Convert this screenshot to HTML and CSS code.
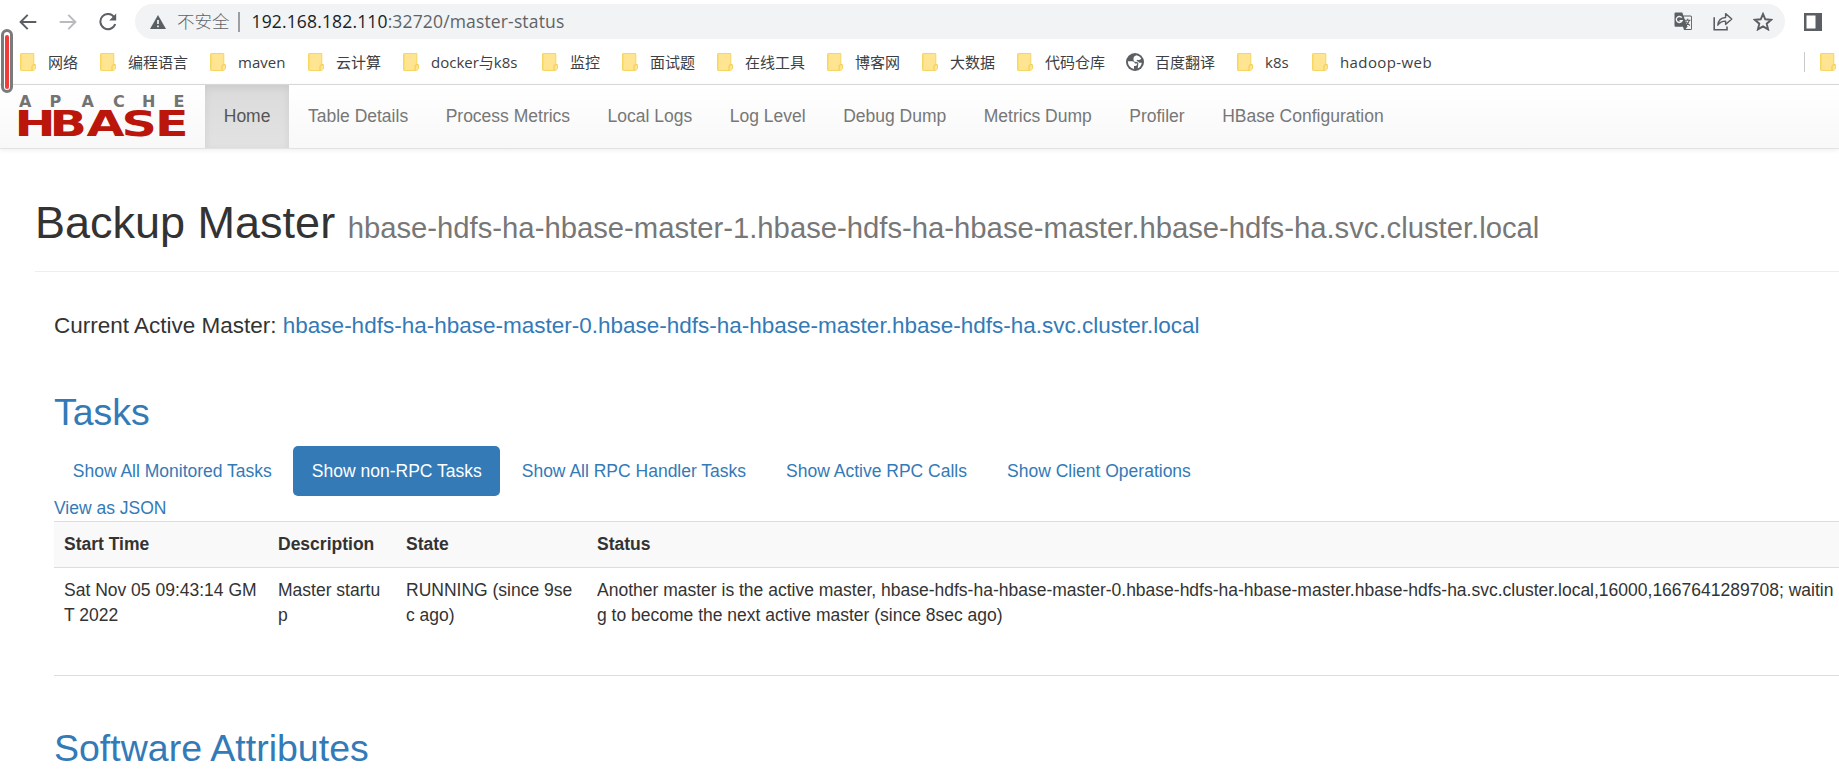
FILE: index.html
```html
<!DOCTYPE html>
<html lang="zh-CN">
<head>
<meta charset="utf-8">
<title>Backup Master</title>
<link rel="stylesheet" href="styles.css">
</head>
<body>
<svg class="defs" width="0" height="0" aria-hidden="true">
  <symbol id="folder" viewBox="0 0 16 18">
    <path d="M1.2.5h12.6v11.2h1.7v4.1l-1.8 1.7H1.2q-.7 0-.7-.7V1.2q0-.7.7-.7z" fill="#ffe591" stroke="#f5d565"/>
    <path d="M1 1v16" stroke="#f7d961" stroke-width="1.2"/>
    <path d="M12 17v-3.800q0-1.500 1.700-1.500h1.300" fill="none" stroke="#efca4d"/>
  </symbol>
</svg>

<div class="browser">
  <div class="toolbar">
    <svg class="tool back" width="18" height="16" viewBox="0 0 18 16"><path d="M17.300 8H2M8.700.900L1.600 8l7.100 7.100" fill="none" stroke="#5b5f63" stroke-width="2"/></svg>
    <svg class="tool forward" width="18" height="16" viewBox="0 0 18 16"><path d="M.700 8H16M9.300.900L16.400 8l-7.100 7.100" fill="none" stroke="#b9bbbd" stroke-width="2"/></svg>
    <svg class="tool reload" width="18" height="18" viewBox="0 0 18 18"><path d="M15.200 4.200A7.600 7.600 0 1 0 16.200 11" fill="none" stroke="#5b5f63" stroke-width="2"/><path d="M17.200.500v7h-7z" fill="#5b5f63"/></svg>
    <div class="omnibox">
      <svg class="warning" width="16" height="14" viewBox="0 0 16 14"><path d="M8 0l8 14H0z" fill="#5b5f63"/><path d="M8 5v4M8 10.500v1.800" stroke="#f1f3f4" stroke-width="1.700"/></svg>
      <span class="insecure">不安全</span>
      <span class="bar"></span>
      <span class="url"><b>192.168.182.110</b>:32720/master-status</span>
      <div class="actions">
        <svg width="19" height="19" viewBox="0 0 19 19"><path d="M1.500.500h6.800l1 3h7.200q1.500 0 1.500 1.500v11.500q0 1.500-1.500 1.500H10l-1-3.200H1.500Q.500 14.800.500 13.500v-12q0-1 1-1z" fill="#5b5f63"/><path d="M9.700 4.500h6.800q.6 0 .6.600v11.300q0 .6-.6.600h-5l2-2.300z" fill="#f1f3f4"/><path d="M7.800 5.700a3 3 0 1 0 .3 3H5.500" fill="none" stroke="#f1f3f4" stroke-width="1.400"/><path d="M11 8.200h5.500M13.700 6.700v1.500M15.400 8.200q-.8 3.500-3.700 5.300M12 9.500q1.500 2.700 4 4" fill="none" stroke="#5b5f63" stroke-width="1.100"/></svg>
        <svg width="20" height="19" viewBox="0 0 20 19"><path d="M1.200 5.200v12.500H14v-3.200" fill="none" stroke="#5b5f63" stroke-width="1.600"/><path d="M4.800 13.200Q5.500 6 12.600 5.500V1.600L18.800 7l-6.200 5.400V9.100Q7.600 9 4.800 13.200z" fill="none" stroke="#5b5f63" stroke-width="1.400" stroke-linejoin="round"/></svg>
        <svg width="20" height="19" viewBox="0 0 20 19"><path d="M10 2l2.300 5.300 5.900.500-4.500 3.900 1.400 5.700-5.100-3-5.100 3 1.400-5.700-4.500-3.900 5.900-.500z" fill="none" stroke="#5b5f63" stroke-width="1.900"/></svg>
      </div>
    </div>
    <svg class="sidepanel" width="18" height="18" viewBox="0 0 18 18"><path d="M0 0h18v18H0zM2.500 2.500v13h9v-13z" fill="#5b5f63" fill-rule="evenodd"/></svg>
  </div>

  <div class="bookmarks">
    <div class="bm"><svg><use href="#folder"/></svg><span>网络</span></div>
    <div class="bm"><svg><use href="#folder"/></svg><span>编程语言</span></div>
    <div class="bm"><svg><use href="#folder"/></svg><span>maven</span></div>
    <div class="bm"><svg><use href="#folder"/></svg><span>云计算</span></div>
    <div class="bm"><svg><use href="#folder"/></svg><span>docker与k8s</span></div>
    <div class="bm"><svg><use href="#folder"/></svg><span>监控</span></div>
    <div class="bm"><svg><use href="#folder"/></svg><span>面试题</span></div>
    <div class="bm"><svg><use href="#folder"/></svg><span>在线工具</span></div>
    <div class="bm"><svg><use href="#folder"/></svg><span>博客网</span></div>
    <div class="bm"><svg><use href="#folder"/></svg><span>大数据</span></div>
    <div class="bm"><svg><use href="#folder"/></svg><span>代码仓库</span></div>
    <div class="bm globe"><svg viewBox="0 0 18 18"><circle cx="9" cy="9" r="9" fill="#5b5f63"/><path d="M1.800 8.200h4.700q2 .3 2.500 2.300h2.300q-.2 2.500-2.300 2.500H8v3Q2 14.500 1.800 8.200zM7.500 4.800Q8 3 10.500 2.200q3.500.8 4.800 3.300-1 2-3.300 1.300-1.700 0-1.500 1.500 2.200-.3 2.600 1.500h2.700q-.6 4-4 5.600l.4-3.800q.8-2.300-1.700-2.600-3 .2-3-2z" fill="#fff"/></svg><span>百度翻译</span></div>
    <div class="bm"><svg><use href="#folder"/></svg><span>k8s</span></div>
    <div class="bm wide"><svg><use href="#folder"/></svg><span>hadoop-web</span></div>
    <div class="bm other"><svg><use href="#folder"/></svg></div>
  </div>
  <div class="marker"></div>
</div>

<nav class="navbar">
  <svg class="logo" width="170" height="46" viewBox="0 0 170 46" role="img" aria-label="Apache HBase">
    <text class="logo-top" x="0 30.500 62.500 94 123 154.500" y="14">APACHE</text>
    <text class="logo-main" transform="scale(1.38 1)" x="-3.300 22.100 48.900 74.200 98.600" y="43">HBASE</text>
  </svg>
  <ul class="menu">
    <li class="active">Home</li>
    <li>Table Details</li>
    <li>Process Metrics</li>
    <li>Local Logs</li>
    <li>Log Level</li>
    <li>Debug Dump</li>
    <li>Metrics Dump</li>
    <li>Profiler</li>
    <li>HBase Configuration</li>
  </ul>
</nav>

<main class="page">
  <h1 class="title">Backup Master <small>hbase-hdfs-ha-hbase-master-1.hbase-hdfs-ha-hbase-master.hbase-hdfs-ha.svc.cluster.local</small></h1>
  <div class="content">
    <h4 class="current">Current Active Master: <a>hbase-hdfs-ha-hbase-master-0.hbase-hdfs-ha-hbase-master.hbase-hdfs-ha.svc.cluster.local</a></h4>
    <h2 class="section"><a>Tasks</a></h2>
    <ul class="pills">
      <li>Show All Monitored Tasks</li>
      <li class="active">Show non-RPC Tasks</li>
      <li>Show All RPC Handler Tasks</li>
      <li>Show Active RPC Calls</li>
      <li>Show Client Operations</li>
    </ul>
    <a class="json">View as JSON</a>
    <table class="tasks">
      <colgroup><col class="c-time"><col class="c-desc"><col class="c-state"><col></colgroup>
      <tr><th>Start Time</th><th>Description</th><th>State</th><th>Status</th></tr>
      <tr><td>Sat Nov 05 09:43:14 GMT 2022</td><td>Master startup</td><td>RUNNING (since 9sec ago)</td><td>Another master is the active master, hbase-hdfs-ha-hbase-master-0.hbase-hdfs-ha-hbase-master.hbase-hdfs-ha.svc.cluster.local,16000,1667641289708; waiting to become the next active master (since 8sec ago)</td></tr>
    </table>
    <h2 class="section software"><a>Software Attributes</a></h2>
  </div>
</main>
</body>
</html>
```

FILE: styles.css
```css
* { box-sizing: border-box; }
body {
  margin: 0;
  height: 778px;
  overflow: hidden;
  background: #fff;
  color: #333;
  font: 17.5px/25px "Liberation Sans", Arial, sans-serif;
}
ul { list-style: none; margin: 0; padding: 0; }
a { color: #337ab7; }
.defs { position: absolute; }

.browser {
  position: relative;
  height: 85px;
  border-bottom: 1px solid #d5d7d9;
  font-family: "Open Sans", "Noto Sans CJK SC", sans-serif;
}
.toolbar { display: flex; align-items: center; height: 43px; padding: 0 18px 0 19px; }
.tool { flex: none; }
.forward { margin-left: 22px; }
.reload { margin-left: 22px; }
.omnibox {
  display: flex;
  align-items: center;
  width: 1650px;
  flex: none;
  height: 35px;
  margin-left: 18px;
  padding-left: 15px;
  border-radius: 18px;
  background: #f1f3f4;
  font-size: 17.5px;
  color: #5f6368;
}
.insecure { margin-left: 11px; width: 61px; font-weight: 300; white-space: nowrap; }
.bar { width: 1.5px; height: 20px; margin: 0 12px 0 0; background: #9b9ea2; }
.url { letter-spacing: .15px; }
.url b { font-weight: 400; color: #202124; }
.actions { display: flex; gap: 20px; margin-left: auto; padding-right: 12px; }
.sidepanel { flex: none; margin-left: 19px; }

.bookmarks {
  display: grid;
  grid-template-columns: 80px 110px 98px 95px 139px 80px 95px 110px 95px 95px 109px 111px 75px 1fr 35px;
  align-items: center;
  height: 38px;
  padding-left: 20px;
  font-size: 15px;
  line-height: 20px;
  color: #3c4043;
}
.bm { display: flex; align-items: center; gap: 12px; white-space: nowrap; }
.bm svg { width: 16px; height: 18px; flex: none; }
.globe svg { width: 18px; }
.globe { gap: 11px; }
.wide { letter-spacing: .4px; }
.other { height: 20px; padding-left: 15px; border-left: 1px solid #c8cacc; }
.marker {
  position: absolute;
  left: 1px;
  top: 29px;
  width: 12px;
  height: 64px;
  border: 3px solid #7b7b7b;
  border-radius: 6px;
  background: #fff;
  z-index: 2;
}
.marker::after {
  content: "";
  display: block;
  width: 4px;
  height: 54px;
  margin: 3px auto;
  border-radius: 2px;
  background: #f23b3b;
}

.navbar {
  display: flex;
  height: 64px;
  padding-left: 19px;
  background: linear-gradient(#fff, #f8f8f8);
  border-bottom: 1px solid #e3e3e3;
  box-shadow: 0 1px 5px rgba(0, 0, 0, .075);
}
.logo { margin: 8px 16px 0 0; flex: none; overflow: visible; }
.logo-top { font: bold 16px "DejaVu Sans", sans-serif; fill: #737373; }
.logo-main { font: bold 35.600px "DejaVu Sans", sans-serif; fill: #ba160c; }
.menu { display: flex; }
.menu li { padding: 18.750px; color: #777; }
.menu .active {
  color: #555;
  background: linear-gradient(#dbdbdb, #e2e2e2);
  box-shadow: inset 0 3px 9px rgba(0, 0, 0, .075);
}

.page { padding-left: 35px; }
h1, h2, h4 { font-weight: 500; line-height: 1.1; margin: 0; }
.title { padding: 49px 0 23px; border-bottom: 1px solid #eee; font-size: 45px; white-space: nowrap; }
.title small { font-size: 29.250px; font-weight: 400; color: #777; }
.content { width: 1813px; padding-left: 19px; }
.current { padding-top: 42.500px; font-size: 22.500px; }
.section { padding-top: 53.250px; font-size: 37.500px; }
.pills { display: flex; gap: 2.500px; margin-top: 12.750px; }
.pills li { padding: 12.500px 18.750px; color: #337ab7; border-radius: 5px; }
.pills .active { background: #337ab7; color: #fff; }
.json { display: block; }
.tasks {
  width: 1794px;
  table-layout: fixed;
  border-collapse: collapse;
  border-bottom: 1px solid #ddd;
}
.c-time { width: 214px; }
.c-desc { width: 128px; }
.c-state { width: 191px; }
.tasks th, .tasks td {
  padding: 10px;
  border-top: 1px solid #ddd;
  text-align: left;
  vertical-align: top;
  word-break: break-all;
}
.tasks th { background: #f9f9f9; }
.tasks td { padding-bottom: 47px; }
.software { padding-top: 52px; }
```
